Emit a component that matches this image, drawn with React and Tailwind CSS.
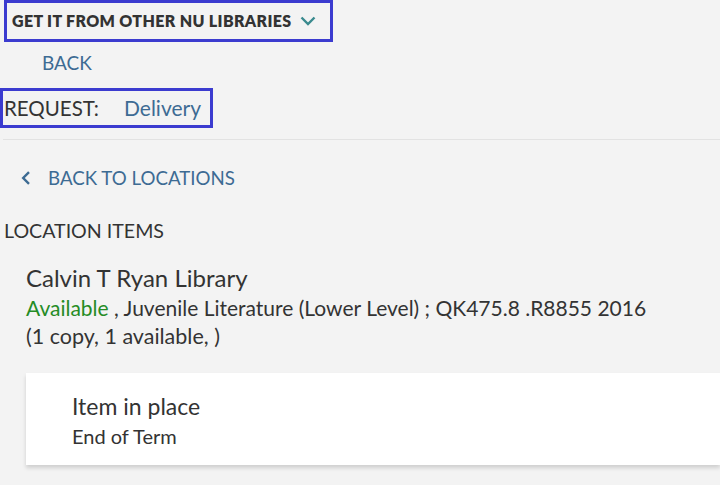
import React from "react";

const ChevronDown = () => (
    <svg width="16" height="10" viewBox="0 0 16 10" fill="none">
        <path d="M1.5 1.5l6.5 6.5 6.5-6.5" stroke="#3a8a8e" strokeWidth="2.4" />
    </svg>
);

const ChevronLeft = () => (
    <svg width="10" height="14" viewBox="0 0 10 14" fill="none">
        <path d="M8 1.2L2.2 7 8 12.8" stroke="#3d6b93" strokeWidth="2.4" />
    </svg>
);

const App = () => {
    return (
        <div
            className="w-[720px] h-[485px] overflow-hidden bg-[#f3f3f3] text-[#333]"
            style={{ fontFamily: "Lato, 'Open Sans', sans-serif" }}
        >
            {/* 다른 도서관 */}
            <div className="ml-[4px] w-[329px] h-[42px] border-[3px] border-[#3b3bcf] flex items-center pl-[5px] gap-[8px]">
                <span className="text-[16px] font-extrabold tracking-[0.35px] text-[#333]">
                    GET IT FROM OTHER NU LIBRARIES
                </span>
                <ChevronDown />
            </div>

            <div className="h-[46px] flex items-center pl-[42px] pb-[4px] text-[19px] text-[#3d6b93]">BACK</div>

            {/* 요청 */}
            <div className="w-[213px] h-[40px] border-[3px] border-[#3b3bcf] flex items-center pl-[1px]">
                <span className="text-[20.5px]">REQUEST:</span>
                <span className="ml-[25px] text-[21px] text-[#3d6b93]">Delivery</span>
            </div>

            <div className="ml-[3px] mt-[11px] h-px bg-[#e2e2e2]" />

            <div className="h-[76px] flex items-center pl-[21px] text-[18.7px] text-[#3d6b93]">
                <ChevronLeft />
                <span className="ml-[17px]">BACK TO LOCATIONS</span>
            </div>

            <div className="h-[30px] flex items-center pl-[4px] text-[19.6px] text-[#333]">LOCATION ITEMS</div>

            {/* 위치 정보 */}
            <div className="pl-[26px] pt-[17px] leading-[29.5px]">
                <p className="text-[24px]">Calvin T Ryan Library</p>
                <p className="text-[21px]">
                    <span className="text-[#258c25]">Available</span> , Juvenile Literature (Lower Level) ; QK475.8 .R8855 2016
                </p>
                <p className="text-[21.5px]">(1 copy, 1 available, )</p>
            </div>

            <div className="ml-[26px] mt-[21px] h-[92px] bg-white shadow-[0_3px_4px_rgba(0,0,0,0.15)] pl-[46px] pt-[18px] leading-[30px]">
                <p className="text-[23px]">Item in place</p>
                <p className="text-[20px]">End of Term</p>
            </div>
        </div>
    );
};

export default App;
